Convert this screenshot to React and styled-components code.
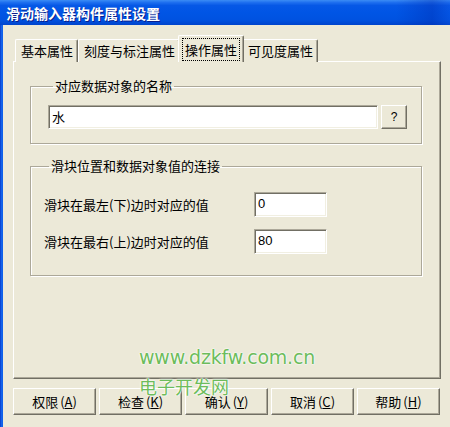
import React from 'react';
import styled, { createGlobalStyle } from 'styled-components';

const Global = createGlobalStyle`
  html, body { margin: 0; padding: 0; background: #ECE9D8; }
  body {
    font-family: "Noto Sans CJK SC", "Liberation Sans", sans-serif;
    font-size: 13px;
    color: #000;
  }
  * { box-sizing: border-box; }
`;

const Window = styled.div`
  position: relative;
  width: 450px;
  height: 427px;
  display: flex;
  flex-direction: column;
  overflow: hidden;
  background: #ECE9D8;
`;

const TitleBar = styled.div`
  height: 25px;
  flex: none;
  display: flex;
  align-items: center;
  padding-left: 6px;
  color: #fff;
  font-weight: bold;
  font-size: 14px;
  text-shadow: 1px 1px 0 #0A1E8C;
  background:
    linear-gradient(to right, rgba(0,0,0,0) 88%, rgba(0,40,170,0.35) 96%, rgba(20,80,220,0.2) 100%),
    linear-gradient(to bottom, #3B8CF5 0%, #1E6FEF 10%, #0658E6 22%, #0055E5 50%, #0052E0 80%, #0044CC 100%);
`;

const Body = styled.div`
  flex: 1;
  display: flex;
`;

const LeftEdge = styled.div`
  width: 3px;
  flex: none;
  background: linear-gradient(to right, #0838C8, #166BF0 60%, #0A58E6);
`;

const Content = styled.div`
  flex: 1;
  display: flex;
  flex-direction: column;
  padding: 11px 9px 0 10px;
`;

const TabStrip = styled.div`
  display: flex;
  align-items: flex-end;
  height: 26px;
  padding-left: 2px;
  position: relative;
  z-index: 1;
  margin-bottom: -1px;
`;

const Tab = styled.div`
  height: ${p => (p.$active ? '27px' : '23px')};
  margin: 0 ${p => (p.$active ? '-2px' : '0')};
  padding: ${p => (p.$active ? '2px 3px 0 3px' : '0 4px 0 5px')};
  display: flex;
  align-items: ${p => (p.$active ? 'flex-start' : 'center')};
  background: #ECE9D8;
  border-top: 1px solid #fff;
  border-left: 1px solid #fff;
  border-right: 1px solid #716F64;
  box-shadow: inset -1px 0 0 #ACA899;
  border-radius: 2px 2px 0 0;
  line-height: 16px;
  white-space: nowrap;
  position: relative;
  z-index: ${p => (p.$active ? 2 : 1)};
`;

const Focus = styled.span`
  display: flex;
  align-items: center;
  height: 23px;
  padding: 0 3px;
  outline: 1px dotted #000;
  outline-offset: -1px;
`;

const Panel = styled.div`
  height: 318px;
  flex: none;
  border-top: 1px solid #fff;
  border-left: 1px solid #fff;
  border-right: 1px solid #716F64;
  border-bottom: 1px solid #716F64;
  box-shadow: inset -1px -1px 0 #ACA899;
  padding: 16px 18px 0 16px;
  display: flex;
  flex-direction: column;
`;

const Group = styled.fieldset`
  margin: ${p => p.$gap || 0}px 0 0 0;
  padding: ${p => p.$pad};
  border: 1px solid #ACA899;
  box-shadow: 1px 1px 0 #fff, inset 1px 1px 0 #fff;
  min-width: 0;
`;

const Legend = styled.legend`
  margin-left: 5px;
  padding: 0 2px;
  line-height: 16px;
`;

const NameRow = styled.div`
  display: flex;
  gap: 3px;
  align-items: flex-start;
`;

const Field = styled.div`
  height: ${p => p.$h || 24}px;
  width: ${p => (p.$w ? p.$w + 'px' : 'auto')};
  flex: ${p => (p.$w ? 'none' : 1)};
  background: #fff;
  border-top: 1px solid #ACA899;
  border-left: 1px solid #ACA899;
  border-right: 1px solid #fff;
  border-bottom: 1px solid #fff;
  box-shadow: inset 1px 1px 0 #716F64, inset -1px -1px 0 #F1EFE2;
  padding: 3px 0 0 3px;
  line-height: 16px;
  font-family: "Liberation Sans", "Noto Sans CJK SC", sans-serif;
`;

const CjkText = styled.span`
  font-family: "Noto Sans CJK SC", sans-serif;
`;

const SmallButton = styled.div`
  width: 26px;
  height: 24px;
  flex: none;
  display: flex;
  align-items: center;
  justify-content: center;
  border-top: 1px solid #fff;
  border-left: 1px solid #fff;
  border-right: 1px solid #716F64;
  border-bottom: 1px solid #716F64;
  box-shadow: inset -1px -1px 0 #ACA899;
  font-family: "Liberation Sans", sans-serif;
  font-size: 12px;
`;

const ValueRows = styled.div`
  display: flex;
  flex-direction: column;
  gap: 12px;
`;

const ValueRow = styled.div`
  display: flex;
  align-items: center;
`;

const Label = styled.div`
  width: 210px;
  flex: none;
  line-height: 16px;
  white-space: nowrap;
`;

const ButtonBar = styled.div`
  display: flex;
  gap: 3px;
  margin-top: 9px;
`;

const Button = styled.div`
  width: 83px;
  height: 27px;
  display: flex;
  align-items: center;
  justify-content: center;
  border-top: 1px solid #fff;
  border-left: 1px solid #fff;
  border-right: 1px solid #716F64;
  border-bottom: 1px solid #716F64;
  box-shadow: inset -1px -1px 0 #ACA899;
  line-height: 15px;
  white-space: nowrap;
  u { text-decoration: underline; text-underline-offset: 1px; }
`;

const Paren = styled.span`
  margin-left: 2px;
`;

const Watermark = styled.div`
  position: absolute;
  left: 139px;
  top: 344px;
  z-index: 5;
  color: #6DBC5B;
  pointer-events: none;
  text-shadow: 0 0 2px #fff, 0 0 2px #fff, 0 0 1px #fff;
`;

const WmUrl = styled.div`
  font-family: "DejaVu Sans", sans-serif;
  font-size: 19px;
  line-height: 26px;
  letter-spacing: -0.2px;
`;

const WmName = styled.div`
  font-family: "Noto Sans CJK SC", sans-serif;
  font-size: 18px;
  line-height: 17px;
  margin-top: 8px;
`;

const tabs = ['基本属性', '刻度与标注属性', '操作属性', '可见度属性'];
const buttons = [
  ['权限', 'A'],
  ['检查', 'K'],
  ['确认', 'Y'],
  ['取消', 'C'],
  ['帮助', 'H'],
];

export default function App() {
  return (
    <>
      <Global />
      <Window>
        <TitleBar>滑动输入器构件属性设置</TitleBar>
        <Body>
          <LeftEdge />
          <Content>
            <TabStrip>
              {tabs.map((t, i) => (
                <Tab key={t} $active={i === 2}>
                  {i === 2 ? <Focus>{t}</Focus> : t}
                </Tab>
              ))}
            </TabStrip>
            <Panel>
              <Group $pad="11px 14px 14px 17px">
                <Legend>对应数据对象的名称</Legend>
                <NameRow>
                  <Field><CjkText>水</CjkText></Field>
                  <SmallButton>?</SmallButton>
                </NameRow>
              </Group>
              <Group $gap={14} $pad="18px 14px 21px 13px">
                <Legend>滑块位置和数据对象值的连接</Legend>
                <ValueRows>
                  <ValueRow>
                    <Label>滑块在最左(下)边时对应的值</Label>
                    <Field $w={73} $h={25}>0</Field>
                  </ValueRow>
                  <ValueRow>
                    <Label>滑块在最右(上)边时对应的值</Label>
                    <Field $w={73} $h={25}>80</Field>
                  </ValueRow>
                </ValueRows>
              </Group>
            </Panel>
            <ButtonBar>
              {buttons.map(([t, k]) => (
                <Button key={k}>
                  {t}<Paren>(<u>{k}</u>)</Paren>
                </Button>
              ))}
            </ButtonBar>
          </Content>
        </Body>
        <Watermark>
          <WmUrl>www.dzkfw.com.cn</WmUrl>
          <WmName>电子开发网</WmName>
        </Watermark>
      </Window>
    </>
  );
}
